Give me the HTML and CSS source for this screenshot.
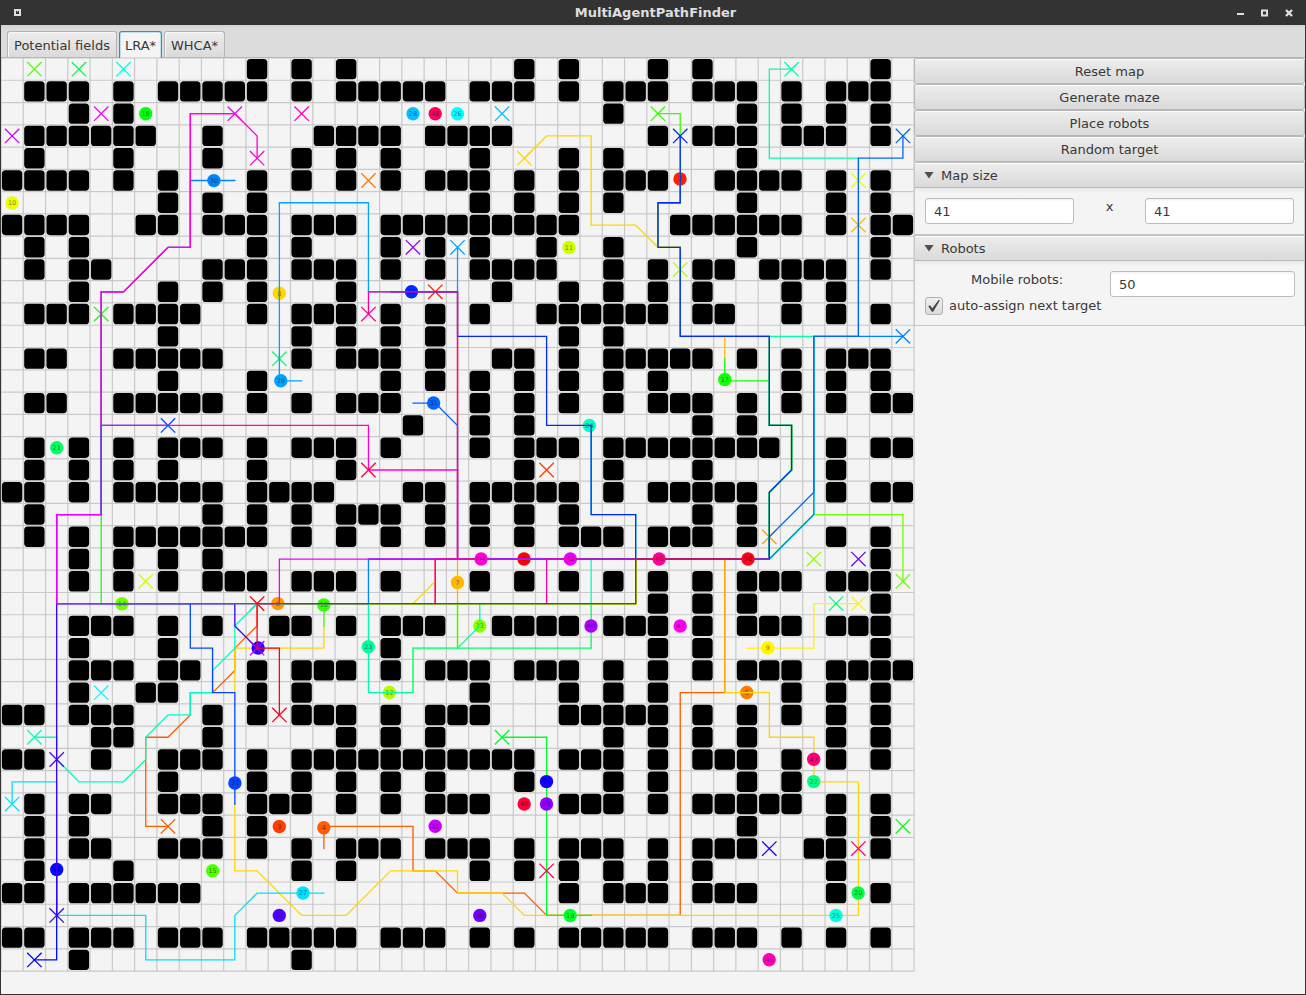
FILE: index.html
```html
<!DOCTYPE html>
<html lang="en">
<head>
<meta charset="utf-8">
<title>MultiAgentPathFinder</title>
<link rel="stylesheet" href="styles.css">
</head>
<body>
<div class="window">
  <header class="titlebar">
    <svg class="menu-icon" width="7" height="7" viewBox="0 0 7 7"><path d="M0 0h7v7H0z" fill="#dedede"/><path d="M2 2h3v3H2z" fill="#333"/><path d="M3 2h1v1H3z" fill="#aaa"/></svg>
    <div class="title">MultiAgentPathFinder</div>
    <div class="controls">
      <svg width="7" height="8" viewBox="0 0 7 8"><path d="M0 4h7v2H0z" fill="#dedede"/></svg>
      <svg width="7" height="8" viewBox="0 0 7 8"><path d="M1 1.5h5v5H1z" fill="none" stroke="#dedede" stroke-width="2"/></svg>
      <svg width="8" height="8" viewBox="0 0 8 8"><path d="M1 1l6 6M7 1l-6 6" stroke="#dedede" stroke-width="2.4"/></svg>
    </div>
  </header>
  <nav class="tabs">
    <div class="tab tab-fields">Potential fields</div>
    <div class="tab tab-lra active">LRA*</div>
    <div class="tab tab-whca">WHCA*</div>
  </nav>
  <main class="content">
    <svg class="map" id="map" width="914" height="936" viewBox="1 58 914 936"></svg>
    <aside class="panel">
      <div class="button">Reset map</div>
      <div class="button">Generate maze</div>
      <div class="button">Place robots</div>
      <div class="button">Random target</div>
      <section class="pane">
        <div class="pane-head"><span class="arrow"></span>Map size</div>
        <div class="pane-body size-body">
          <div class="field">41</div>
          <div class="times">x</div>
          <div class="field">41</div>
        </div>
      </section>
      <section class="pane">
        <div class="pane-head"><span class="arrow"></span>Robots</div>
        <div class="pane-body robots-body">
          <div class="robots-row">
            <div class="robots-label">Mobile robots:</div>
            <div class="field robots-field">50</div>
          </div>
          <div class="check-row">
            <div class="checkbox"><svg width="12" height="12" viewBox="0 0 12 12"><path d="M0.3 6.2L2 5.2L4.3 8.3L10.6 0L12 0.3L5.2 11.8H3.8z" fill="#4a4a4a"/></svg></div>
            <div class="check-label">auto-assign next target</div>
          </div>
        </div>
      </section>
    </aside>
  </main>
</div>
<script src="map.js"></script>
</body>
</html>
```
FILE: styles.css
```css
* { box-sizing: border-box; }
body {
  margin: 0;
  width: 1306px;
  height: 995px;
  overflow: hidden;
  background: #333;
  color: #383838;
  font: 13px/16px "DejaVu Sans", sans-serif;
}
.window { display: flex; flex-direction: column; height: 995px; }
.titlebar {
  display: flex;
  align-items: center;
  height: 25px;
  padding: 0 13px 0 14px;
  background: #333;
  color: #dedede;
}
.menu-icon { width: 7px; margin-right: 53px; }
.title { flex: 1; text-align: center; font-weight: bold; font-size: 13px; }
.controls { display: flex; align-items: center; gap: 17px; width: 56px; }
.tabs {
  display: flex;
  align-items: flex-end;
  gap: 2px;
  height: 33px;
  margin: 0 1px;
  padding-left: 6px;
  background: linear-gradient(#d2d2d2, #dcdcdc 4px);
  border-bottom: 1px solid #b5b5b5;
}
.tab {
  height: 26px;
  padding-top: 6px;
  text-align: center;
  background: linear-gradient(#ededed, #dadada);
  border: 1px solid #b4b4b4;
  border-bottom: 0;
  border-radius: 3px 3px 0 0;
  box-shadow: inset 1px 1px 0 #f8f8f8;
}
.tab-fields { width: 110px; }
.tab-lra { width: 43px; }
.tab-whca { width: 61px; }
.tab.active {
  height: 27px;
  margin-bottom: -1px;
  background: #f4f4f4;
  border: 1px solid #1a9ac9;
  border-bottom: 0;
  box-shadow: inset 0 0 0 0.5px #8ccbe4;
}
.content { display: flex; flex: 1; margin: 0 1px 1px; background: #f4f4f4; }
.map { display: block; flex: none; width: 914px; height: 936px; margin-right: -1px; }
.map text { font: 6.5px "DejaVu Sans", sans-serif; text-anchor: middle; }
.panel { width: 391px; }
.button {
  height: 26px;
  padding-top: 5px;
  text-align: center;
  background: linear-gradient(#ededed, #dadada);
  border: 1px solid #b8b8b8;
  border-radius: 3px;
  box-shadow: inset 0 1px 0 #fcfcfc;
}
.pane { border: 1px solid #c8c8c8; border-top: 0; }
.pane-head {
  display: flex;
  align-items: center;
  height: 26px;
  padding: 1px 0 0 9px;
  background: linear-gradient(#ededed, #dadada);
  border-top: 1px solid #c0c0c0;
  border-bottom: 1px solid #b8b8b8;
  box-shadow: inset 0 1px 0 #fcfcfc;
}
.arrow {
  width: 10px;
  height: 7px;
  margin: -1px 7px 0 0;
  background: #505050;
  clip-path: polygon(0 0, 100% 0, 50% 100%);
}
.pane-body { background: linear-gradient(#e8e8e8, #f4f4f4 5px); }
.size-body { display: flex; height: 46px; padding: 10px 0 0 10px; }
.times { width: 71px; padding-top: 1px; text-align: center; }
.field {
  width: 149px;
  height: 26px;
  padding: 5px 8px;
  background: linear-gradient(#f2f2f2, #fff 3px);
  border: 1px solid #bdbdbd;
  border-radius: 3px;
}
.robots-body { height: 64px; padding: 10px 0 0 10px; }
.robots-row { display: flex; }
.robots-label { width: 185px; padding: 1px 0 0 46px; }
.robots-field { width: 185px; }
.check-row { display: flex; align-items: center; gap: 6px; }
.checkbox {
  display: flex;
  align-items: center;
  justify-content: center;
  width: 18px;
  height: 18px;
  background: linear-gradient(#eee, #dcdcdc);
  border: 1px solid #b0b0b0;
  border-radius: 3px;
}
```
FILE: map.js
```javascript
const STEP = 22.27;
const LEFT = 1;
const TOP = 58;
const SIZE = 41;

// Wall columns of every row; "a-b" is an inclusive run.
const WALLS = [
  "11 13 15 23 25 29 31 39",
  "1-3 5 7-11 13 15-19 21-23 25 27-29 31-33 35 37-39",
  "3 5 27 33 35 37 39",
  "1-6 9 14-17 19-22 29 31-33 35-37 39",
  "1 5 9 13 15 17 21 25 27 33",
  "0-3 5 7 11 13 15 17 19-21 23 25 27-29 32-35 37 39",
  "7 9 11 21 23 25 27 33 37 39",
  "0-3 6 7 9-11 13-15 17-25 30-35 37 39 40",
  "1 3 11 13 17 19 21 24 27 33 39",
  "1 3 4 9-11 13-15 17 19 21-24 27 29 31 32 34-37 39",
  "3 7 9 11 15 22 25 27 29 31 35 37",
  "1-3 5-8 11 13-15 17 19 21 24-29 31 32 35 37 39",
  "7 13 15 17 19 25 27",
  "1 2 5-9 13 15-17 19 22 23 25 27-31 33 35 37-39",
  "7 11 17 19 21 23 25 27 29 35 37 39",
  "1 2 5-9 11 13 15-17 21 23 25 27 29-31 33 35 37 39 40",
  "18 21 23 31 33",
  "1 3 5 7-9 11 13-15 17 21 23-25 27-34 37 39 40",
  "1 3 5 7 11 15 23 27 31 37",
  "0 1 3 5-9 11-14 18 19 21-25 27 29-33 37 39 40",
  "1 9 11 13 15-17 19 21 23 25 31 33",
  "1 3 5-11 13 15 17 19 21 23 25-27 29-31 33 37 39",
  "3 5 7 9 39",
  "3 5 7 9-11 13-15 17 21 23 25 27 29 31 33-35 37-39",
  "29 31 33 39",
  "3-5 7 9 12 13 15 17-19 22-25 27-29 31 33-35 37-39",
  "3 7 17 29 31 39",
  "3-5 7 8 11 13-15 17 19-21 23-25 27 29 31 33-35 37-40",
  "3 6 7 11 13 21 25 27 29 35 37 39",
  "0 1 3-5 9 11 13-15 17 19-21 25-29 31 33 35 37 39",
  "4 5 9 15 17 19 27 29 31 33 37 39",
  "0 1 4 7-9 11 13-23 25-27 29 31-33 35 37 39",
  "7 11 13 15 17 19 23 27 29 33 35",
  "1 3 4 7-9 11-13 15 17 19-21 25-27 29 31-35 37 39",
  "1 3 9 11 33 37 39",
  "1 3 4 7-9 11 13 15-17 19-21 23 25-27 29 31-33 36 37 39",
  "1 5 13 15 21 23 25 27 29 31 37",
  "0 1 3-8 25 27-29 31-33 37 39",
  "",
  "0 1 3-5 7-9 11-15 17-19 21 23 25-29 31-33 35 37 39",
  "3 13"
];

// [id, x, y, target column, target row, paths in cell coordinates]
const ROBOTS = [
  [1, 524, 559, 11, 24, ["23,22 19,22 19,24 11,24"]],
  [2, 680, 179, 19, 10, ["30,5 30,6 29,6 29,8 30,8 30,12 34,12 34,16 35,16 35,18 34,19 34,22 20,22 20,10 19,10"]],
  [3, 279.3, 826.5, 24, 18, []],
  [4, 323.8, 827.7, 7, 34, ["14,35 14,34 18,34 18,36 19,36 20,37 23,37 24,38 30,38 30,28 32,28 32,22 28,22 28,24 11,24 11,25 10,26 10,27 9,28 8,28 8,29 7,30 6,30 6,34 7,34"]],
  [5, 746.8, 692.5, 16, 5, []],
  [6, 277.8, 603.6, 34, 21, ["12,24 28,24 28,22 34,22 34,21"]],
  [7, 457.5, 582.5, 38, 7, ["20,22 20,24 28,24 28,22 34,22", "32,22 32,28", "32,12 32,13", "24,38 30,38", "18,36 19,36", "20,37 22,37"]],
  [8, 279.3, 293.3, 23, 4, ["19,23 18,24 14,24", "14,25 14,26 10,26 10,28", "10,33 10,36 11,36 13,38 15,38 17,36 20,36 20,37 22,37 23,38 38,38 38,32 36,32 36,30 34,30 34,28 32,28", "30,12 30,8 29,8 28,7 26,7 26,3 24,3 23,4"]],
  [9, 767.8, 648, 38, 24, ["33,26 36,26 36,24 38,24"]],
  [10, 12.1, 203, 38, 5, []],
  [11, 569, 247.5, 6, 23, []],
  [12, 389.5, 692.5, 30, 9, ["17,28 18,28 18,26 20,26 20,24 28,24 28,22 34,22 34,19 35,18 35,16 34,16 34,12 30,12 30,9"]],
  [13, 479.8, 626, 36, 22, []],
  [14, 122, 603.7, 40, 23, ["5,24 28,24 28,22 34,22 36,20 40,20 40,23"]],
  [15, 212.6, 870.8, 1, 0, []],
  [16, 323.8, 605, 29, 2, ["14,25 14,24 28,24 28,22 34,22 34,19 35,18 35,16 34,16 34,12 30,12 30,8 29,8 29,6 30,6 30,2 29,2", "20,24 20,26"]],
  [17, 724.8, 379.5, 4, 11, ["32,13 32,14 34,14 34,16 35,16 35,18 34,19 34,22 28,22 28,24 4,24 4,11"]],
  [18, 145.7, 113.8, 40, 34, []],
  [19, 570.2, 915.5, 22, 30, ["26,38 24,38 24,30 22,30"]],
  [20, 858.2, 893, 3, 0, []],
  [21, 56.7, 447.8, 12, 13, ["20,26 26,26 26,24"]],
  [22, 813.7, 781.6, 37, 24, []],
  [23, 368.3, 646.7, 35, 0, ["16,24 16,28 18,28 18,26 20,26 21,25 21,24", "26,22 34,22 36,20 36,12", "34,22 34,19 35,18 35,16 34,16 34,12 38,12 38,4 34,4 34,0 35,0"]],
  [24, 589.4, 425.5, 1, 30, ["26,16 26,20 28,20 28,22 26,22 26,24 11,24 10,25 10,26 9,27 9,28 8,28 8,29 7,29 6,30 6,31 5,32 3,32 2,31 2,30 1,30"]],
  [25, 836, 915.5, 5, 0, []],
  [26, 457.4, 113.8, 4, 28, []],
  [27, 303, 893, 0, 33, ["14,37 11,37 10,38 10,40 6,40 6,38 2,38 2,32 0,32 0,33"]],
  [28, 413, 113.8, 22, 2, []],
  [29, 280.8, 380.7, 20, 8, ["13,14 12,14 12,6 16,6 16,10 20,10 20,8"]],
  [30, 213.9, 180.6, 40, 12, ["10,5 8,5 8,8 7,8 5,10 4,10 4,20 2,20 2,24 16,24 16,22 34,22 36,20 36,12 40,12"]],
  [31, 433.6, 403, 40, 3, ["18,15 19,15 20,16 20,22 34,22 34,21 36,19 36,12 38,12 38,4 40,4 40,3"]],
  [32, 234.9, 783, 7, 16, ["10,33 10,28 9,28 9,26 8,26 8,24 2,24 2,20 4,20 4,16 7,16"]],
  [33, 411.5, 291.8, 30, 3, ["17,10 20,10 20,12 24,12 24,16 26,16 26,20 28,20 28,22 34,22 34,19 35,18 35,16 34,16 34,12 30,12 30,8 29,8 29,6 30,6 30,3"]],
  [34, 56.7, 869.5, 1, 40, ["2,36 2,40 1,40"]],
  [35, 546.5, 781.6, 34, 35, []],
  [36, 258.2, 648, 2, 38, ["11,26 10,25 10,24 2,24 2,38"]],
  [37, 279.3, 915.4, 2, 31, []],
  [38, 479.8, 915.4, 38, 22, []],
  [39, 546.5, 804, 18, 8, ["16,22 28,22"]],
  [40, 591, 626, 11, 26, []],
  [41, 435.2, 826.3, 0, 3, []],
  [42, 570.3, 559, 10, 2, ["25,22 12,22 12,24 2,24 2,20 4,20 4,10 5,10 7,8 8,8 8,2 10,2"]],
  [43, 680.2, 626, 4, 2, []],
  [44, 481.1, 559, 11, 4, ["20,22 20,18 16,18 16,16 4,16 4,10 5,10 7,8 8,8 8,2 10,2 11,3 11,4"]],
  [45, 769.2, 959.8, 13, 2, []],
  [46, 659.2, 559, 16, 11, ["34,22 24,22 24,24", "19,24 19,22 21,22", "20,22 20,10 16,10 16,11"]],
  [47, 813.7, 759.3, 38, 35, []],
  [48, 435.2, 113.8, 24, 36, []],
  [49, 524.2, 804, 16, 18, []],
  [50, 748, 559, 12, 29, ["33,22 28,22 28,24 11,24 11,26 12,26 12,29"]]
];

const cx = c => LEFT + STEP * (c + 0.5);
const cy = r => TOP + STEP * (r + 0.5);
const out = [];

for (let i = 0; i <= SIZE; i++) {
  const x = LEFT + STEP * i, y = TOP + STEP * i, end = STEP * SIZE;
  out.push(`<path d="M${x} ${TOP}v${end}M${LEFT} ${y}h${end}" stroke="#c9c9c9" stroke-width="1.2" fill="none"/>`);
}

WALLS.forEach((row, r) => row.split(" ").filter(Boolean).forEach(run => {
  const [a, b = a] = run.split("-").map(Number);
  for (let c = a; c <= b; c++) {
    out.push(`<rect x="${LEFT + STEP * c + 0.9}" y="${TOP + STEP * r + 0.9}" width="20.4" height="20.4" rx="3.6"/>`);
  }
}));

for (const [id, x, y, tc, tr, paths] of ROBOTS) {
  const color = `hsl(${(id - 1) * 7.2} 100% 50%)`;
  for (const p of paths) {
    const points = p.split(" ").map(s => s.split(",").map(Number)).map(([c, r]) => `${cx(c)},${cy(r)}`).join(" ");
    out.push(`<polyline points="${points}" fill="none" stroke="${color}" stroke-width="1.3" stroke-linecap="square"/>`);
  }
  const tx = cx(tc), ty = cy(tr);
  out.push(`<path d="M${tx - 7.2} ${ty - 7.2}l14.4 14.4M${tx + 7.2} ${ty - 7.2}l-14.4 14.4" stroke="${color}" stroke-width="1.3"/>`);
  out.push(`<circle cx="${x}" cy="${y}" r="6.7" fill="${color}"/>`);
  out.push(`<text x="${x}" y="${y + 2.3}" fill="#000" fill-opacity="0.5">${id}</text>`);
}

document.getElementById("map").innerHTML = out.join("");
```
